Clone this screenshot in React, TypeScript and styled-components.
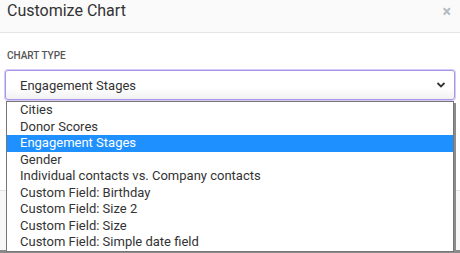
import React from 'react';
import styled, { createGlobalStyle } from 'styled-components';

const GlobalStyle = createGlobalStyle`
  html, body {
    margin: 0;
    padding: 0;
    background: #ffffff;
    overflow: hidden;
  }
  body {
    font-family: Roboto, "Liberation Sans", sans-serif;
  }
`

const Modal = styled.div`
  width: 460px;
  height: 253px;
  display: flex;
  flex-direction: column;
  position: relative;
  background: #ffffff;
`

const Header = styled.header`
  height: 33px;
  box-sizing: border-box;
  display: flex;
  justify-content: space-between;
  align-items: flex-start;
  padding: 1px 9px 0 7px;
  background: #fafafa;
  border-bottom: 1px solid #e6e6e6;
`

const Title = styled.h2`
  margin: 0;
  font-size: 16px;
  line-height: 20px;
  font-weight: 400;
  color: #333333;
`

const Close = styled.span`
  margin-top: 1px;
  font-size: 16px;
  line-height: 20px;
  font-weight: 700;
  color: #b3bac2;
`

const Body = styled.div`
  padding: 17px 5px 0 5px;
  height: 157px;
  box-sizing: border-box;
`

const Label = styled.label`
  display: block;
  padding-left: 2px;
  font-size: 10px;
  line-height: 12px;
  font-weight: 500;
  color: #555555;
  text-transform: uppercase;
  margin-bottom: 8px;
`

const SelectBox = styled.div`
  position: relative;
  height: 30px;
  box-sizing: border-box;
  display: flex;
  align-items: center;
  justify-content: space-between;
  padding: 0 8px 0 14px;
  border: 1px solid #a995e6;
  border-radius: 3px;
  box-shadow: 0 0 0 1px #d6cbf7;
  background: linear-gradient(#ffffff 60%, #f1f1f1);
  font-size: 13px;
  color: #333333;
`

const Chevron = styled.svg`
  width: 10px;
  height: 10px;
`

const Options = styled.ul`
  position: absolute;
  top: 30px;
  left: 0;
  width: 448px;
  margin: 0;
  padding: 0;
  list-style: none;
  background: #ffffff;
  border: 1px solid #767676;
  box-sizing: border-box;
  box-shadow: 2px 2px 0 #8c8c8c;
  z-index: 2;
`

const Option = styled.li<{ $active?: boolean }>`
  height: 16.5px;
  line-height: 16.5px;
  padding-left: 13px;
  font-size: 13px;
  white-space: nowrap;
  color: ${p => (p.$active ? '#ffffff' : '#333333')};
  background: ${p => (p.$active ? '#1e90ff' : 'transparent')};
`

const Footer = styled.footer`
  flex: 1;
  background: #f7f7f7;
  border-top: 1px solid #e2e2e2;
  border-bottom: 3px solid #8a8a8a;
`

const options = [
  'Cities',
  'Donor Scores',
  'Engagement Stages',
  'Gender',
  'Individual contacts vs. Company contacts',
  'Custom Field: Birthday',
  'Custom Field: Size 2',
  'Custom Field: Size',
  'Custom Field: Simple date field',
]

const App: React.FC = () => {
  const selected = 'Engagement Stages'
  return (
    <Modal>
      <GlobalStyle />
      <Header>
        <Title>Customize Chart</Title>
        <Close>×</Close>
      </Header>
      <Body>
        <Label>Chart type</Label>
        <SelectBox>
          <span>{selected}</span>
          <Chevron viewBox="0 0 10 10">
            <path d="M1.5 3 L5 6.5 L8.5 3" fill="none" stroke="#333" strokeWidth="1.8" />
          </Chevron>
          <Options>
            {options.map(o => (
              <Option key={o} $active={o === selected}>{o}</Option>
            ))}
          </Options>
        </SelectBox>
      </Body>
      <Footer />
    </Modal>
  );
}

export default App;
